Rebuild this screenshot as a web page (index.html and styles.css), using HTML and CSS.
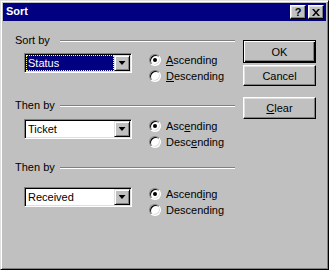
FILE: index.html
```html
<!DOCTYPE html>
<html lang="en">
<head>
    <meta charset="UTF-8">
    <title>Sort</title>
    <link rel="stylesheet" href="styles.css">
</head>
<body>

<div class="window">
    <div class="titlebar">
        <span class="title">Sort</span>
        <div class="title-btns">
            <button class="tbtn">?</button>
            <button class="tbtn">
                <svg width="8" height="7" viewBox="0 0 8 7"><path d="M0 0h2l2 2.5L6 0h2L5 3.5 8 7H6L4 4.5 2 7H0l3-3.5z"/></svg>
            </button>
        </div>
    </div>

    <div class="content">
        <div class="groups">
            <!-- Sort by -->
            <div class="group">
                <div class="group-head"><span class="group-label">Sort by</span><span class="rule"></span></div>
                <div class="group-body">
                    <div class="combo">
                        <span class="combo-value selected">Status</span>
                        <span class="combo-btn"></span>
                    </div>
                    <div class="radios">
                        <div class="radio"><span class="radio-mark checked"></span><span><u>A</u>scending</span></div>
                        <div class="radio"><span class="radio-mark"></span><span><u>D</u>escending</span></div>
                    </div>
                </div>
            </div>

            <!-- Then by -->
            <div class="group group-second">
                <div class="group-head"><span class="group-label">Then by</span><span class="rule"></span></div>
                <div class="group-body">
                    <div class="combo">
                        <span class="combo-value">Ticket</span>
                        <span class="combo-btn"></span>
                    </div>
                    <div class="radios">
                        <div class="radio"><span class="radio-mark checked"></span><span>Asc<u>e</u>nding</span></div>
                        <div class="radio"><span class="radio-mark"></span><span>Desc<u>e</u>nding</span></div>
                    </div>
                </div>
            </div>

            <!-- Then by -->
            <div class="group group-third">
                <div class="group-head"><span class="group-label">Then by</span><span class="rule"></span></div>
                <div class="group-body">
                    <div class="combo">
                        <span class="combo-value">Received</span>
                        <span class="combo-btn"></span>
                    </div>
                    <div class="radios">
                        <div class="radio"><span class="radio-mark checked"></span><span>Ascend<u>i</u>ng</span></div>
                        <div class="radio"><span class="radio-mark"></span><span>Descending</span></div>
                    </div>
                </div>
            </div>
        </div>

        <div class="actions">
            <button class="btn btn-default">OK</button>
            <button class="btn btn-cancel">Cancel</button>
            <button class="btn btn-clear"><u>C</u>lear</button>
        </div>
    </div>
</div>

</body>
</html>
```

FILE: styles.css
```css
body {
    margin: 0;
    font-family: "Liberation Sans", Arial, sans-serif;
    font-size: 11px;
    color: #000;
    background: #c0c0c0;
}

.window {
    width: 329px;
    height: 270px;
    box-sizing: border-box;
    background: #c0c0c0;
    border: 1px solid;
    border-color: #dfdfdf #000 #000 #dfdfdf;
    box-shadow: inset 1px 1px #fff, inset -1px -1px #808080;
    padding: 2px;
    display: flex;
    flex-direction: column;
}

/* Title bar */
.titlebar {
    height: 18px;
    flex-shrink: 0;
    background: #000080;
    color: #fff;
    display: flex;
    align-items: center;
    justify-content: space-between;
    padding: 0 2px 0 3px;
}

.title {
    font-weight: bold;
    font-size: 11px;
    line-height: 13px;
    padding-bottom: 1px;
}

.title-btns {
    display: flex;
    gap: 2px;
}

.tbtn {
    width: 16px;
    height: 14px;
    box-sizing: border-box;
    background: #c0c0c0;
    border: 1px solid;
    border-color: #fff #000 #000 #fff;
    box-shadow: inset -1px -1px #808080, inset 1px 1px #dfdfdf;
    padding: 0;
    display: flex;
    align-items: center;
    justify-content: center;
    font-family: "Liberation Sans", Arial, sans-serif;
    font-weight: bold;
    font-size: 11px;
    line-height: 12px;
    color: #000;
}

/* Body */
.content {
    flex: 1;
    display: flex;
}

.groups {
    width: 232px;
    padding-top: 13px;
}

.group-second {
    margin-top: 15px;
}

.group-third {
    margin-top: 11px;
}

.group-head {
    display: flex;
    align-items: center;
    height: 13px;
}

.group-label {
    width: 45px;
    padding-left: 12px;
    line-height: 13px;
}

.rule {
    flex: 1;
    border-top: 1px solid #808080;
    border-bottom: 1px solid #fff;
}

.group-body {
    display: flex;
    align-items: flex-start;
    padding-left: 21px;
    margin-top: 6px;
}

.group-second .group-body {
    margin-top: 7px;
}

.group-third .group-body {
    margin-top: 13px;
}

/* Combo box */
.combo {
    width: 108px;
    height: 20px;
    box-sizing: border-box;
    display: flex;
    background: #fff;
    border: 1px solid;
    border-color: #808080 #fff #fff #808080;
    box-shadow: inset 1px 1px #000, inset -1px -1px #dfdfdf;
    padding: 1px;
}

.combo-value {
    flex: 1;
    line-height: 16px;
    padding-left: 2px;
}

.combo-value.selected {
    background: #000080;
    color: #fff;
    outline: 1px dotted #ffff80;
    outline-offset: -1px;
}

.combo-btn {
    width: 16px;
    height: 16px;
    box-sizing: border-box;
    background: #c0c0c0;
    border: 1px solid;
    border-color: #dfdfdf #000 #000 #dfdfdf;
    box-shadow: inset 1px 1px #fff, inset -1px -1px #808080;
    display: flex;
    align-items: center;
    justify-content: center;
}

.combo-btn::after {
    content: "";
    width: 7px;
    height: 4px;
    background: #000;
    clip-path: polygon(0 0, 100% 0, 50% 100%);
}

/* Radio buttons */
.radios {
    display: flex;
    flex-direction: column;
    margin-left: 17px;
    margin-top: -1px;
}

.radio {
    display: flex;
    align-items: center;
    height: 16px;
    gap: 5px;
}

.radio-mark {
    width: 12px;
    height: 12px;
    box-sizing: border-box;
    border-radius: 50%;
    background: #fff;
    border: 1px solid;
    border-color: #808080 #fff #fff #808080;
    box-shadow: inset 1px 1px #000, inset -1px -1px #dfdfdf;
    display: flex;
    align-items: center;
    justify-content: center;
}

.radio-mark.checked::after {
    content: "";
    width: 4px;
    height: 4px;
    border-radius: 50%;
    background: #000;
}

/* Push buttons */
.actions {
    display: flex;
    flex-direction: column;
    margin-left: 8px;
    padding-top: 19px;
}

.btn {
    width: 73px;
    height: 22px;
    box-sizing: border-box;
    background: #c0c0c0;
    border: 1px solid;
    border-color: #fff #000 #000 #fff;
    box-shadow: inset -1px -1px #808080, inset 1px 1px #dfdfdf;
    padding: 0;
    font-family: "Liberation Sans", Arial, sans-serif;
    font-size: 11px;
    color: #000;
}

.btn-default {
    height: 23px;
    border-color: #000;
    box-shadow: inset 1px 1px #fff, inset -1px -1px #000, inset -2px -2px #808080;
}

.btn-cancel {
    height: 21px;
    margin-top: 2px;
}

.btn-clear {
    margin-top: 11px;
}
```
